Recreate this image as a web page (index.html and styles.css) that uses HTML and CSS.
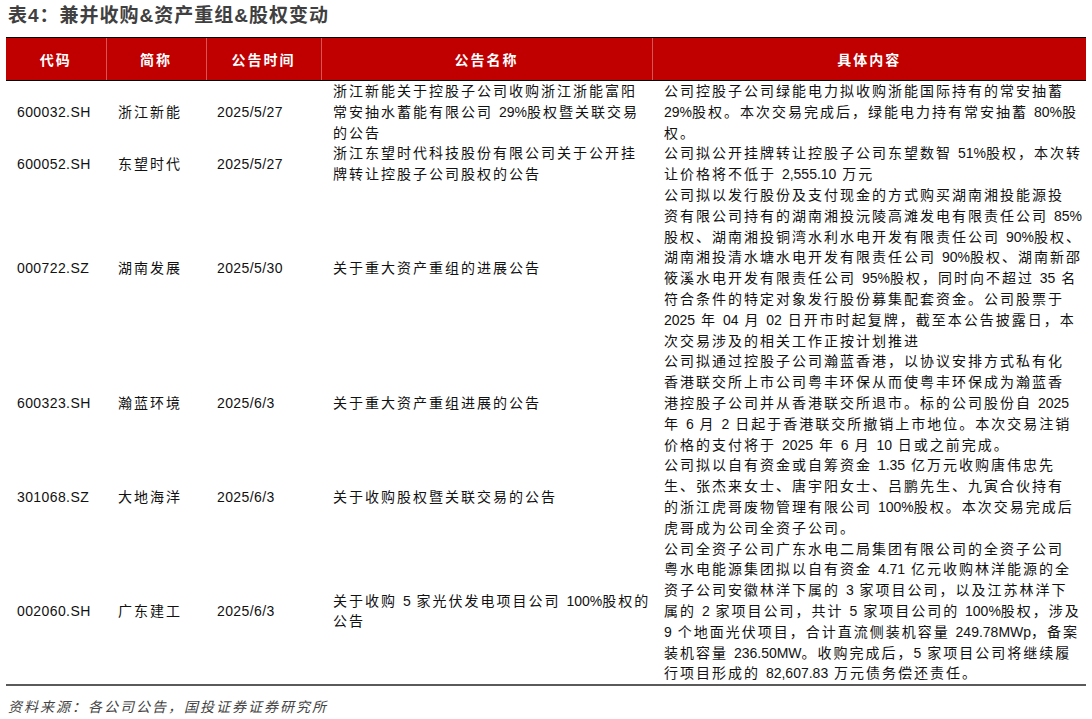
FILE: index.html
```html
<!DOCTYPE html>
<html lang="zh-CN">
<head>
<meta charset="utf-8">
<title>表4：兼并收购&amp;资产重组&amp;股权变动</title>
<link rel="stylesheet" href="styles.css">
</head>
<body>
<div class="page">
  <h1 class="title">表4：兼并收购&amp;资产重组&amp;股权变动</h1>
  <table class="deals">
    <colgroup>
      <col class="c-code"><col class="c-name"><col class="c-date"><col class="c-ann"><col class="c-detail">
    </colgroup>
    <thead>
      <tr><th>代码</th><th>简称</th><th>公告时间</th><th>公告名称</th><th>具体内容</th></tr>
    </thead>
    <tbody>
      <tr>
        <td class="code">600032.SH</td>
        <td>浙江新能</td>
        <td class="code">2025/5/27</td>
        <td>
          <div class="ln">浙江新能关于控股子公司收购浙江浙能富阳</div>
          <div class="ln">常安抽水蓄能有限公司 <span class="n">29%</span>股权暨关联交易</div>
          <div class="ln">的公告</div>
        </td>
        <td>
          <div class="ln">公司控股子公司绿能电力拟收购浙能国际持有的常安抽蓄</div>
          <div class="ln"><span class="n">29%</span>股权。本次交易完成后，绿能电力持有常安抽蓄 <span class="n">80%</span>股</div>
          <div class="ln">权。</div>
        </td>
      </tr>
      <tr>
        <td class="code">600052.SH</td>
        <td>东望时代</td>
        <td class="code">2025/5/27</td>
        <td>
          <div class="ln">浙江东望时代科技股份有限公司关于公开挂</div>
          <div class="ln">牌转让控股子公司股权的公告</div>
        </td>
        <td>
          <div class="ln">公司拟公开挂牌转让控股子公司东望数智 <span class="n">51%</span>股权，本次转</div>
          <div class="ln">让价格将不低于 <span class="n">2,555.10</span> 万元</div>
        </td>
      </tr>
      <tr>
        <td class="code">000722.SZ</td>
        <td>湖南发展</td>
        <td class="code">2025/5/30</td>
        <td><div class="ln">关于重大资产重组的进展公告</div></td>
        <td>
          <div class="ln">公司拟以发行股份及支付现金的方式购买湖南湘投能源投</div>
          <div class="ln">资有限公司持有的湖南湘投沅陵高滩发电有限责任公司 <span class="n">85%</span></div>
          <div class="ln">股权、湖南湘投铜湾水利水电开发有限责任公司 <span class="n">90%</span>股权、</div>
          <div class="ln">湖南湘投清水塘水电开发有限责任公司 <span class="n">90%</span>股权、湖南新邵</div>
          <div class="ln">筱溪水电开发有限责任公司 <span class="n">95%</span>股权，同时向不超过 <span class="n">35</span> 名</div>
          <div class="ln">符合条件的特定对象发行股份募集配套资金。公司股票于</div>
          <div class="ln"><span class="n">2025</span> 年 <span class="n">04</span> 月 <span class="n">02</span> 日开市时起复牌，截至本公告披露日，本</div>
          <div class="ln">次交易涉及的相关工作正按计划推进</div>
        </td>
      </tr>
      <tr>
        <td class="code">600323.SH</td>
        <td>瀚蓝环境</td>
        <td class="code">2025/6/3</td>
        <td><div class="ln">关于重大资产重组进展的公告</div></td>
        <td>
          <div class="ln">公司拟通过控股子公司瀚蓝香港，以协议安排方式私有化</div>
          <div class="ln">香港联交所上市公司粤丰环保从而使粤丰环保成为瀚蓝香</div>
          <div class="ln">港控股子公司并从香港联交所退市。标的公司股份自 <span class="n">2025</span></div>
          <div class="ln">年 <span class="n">6</span> 月 <span class="n">2</span> 日起于香港联交所撤销上市地位。本次交易注销</div>
          <div class="ln">价格的支付将于 <span class="n">2025</span> 年 <span class="n">6</span> 月 <span class="n">10</span> 日或之前完成。</div>
        </td>
      </tr>
      <tr>
        <td class="code">301068.SZ</td>
        <td>大地海洋</td>
        <td class="code">2025/6/3</td>
        <td><div class="ln">关于收购股权暨关联交易的公告</div></td>
        <td>
          <div class="ln">公司拟以自有资金或自筹资金 <span class="n">1.35</span> 亿万元收购唐伟忠先</div>
          <div class="ln">生、张杰来女士、唐宇阳女士、吕鹏先生、九寅合伙持有</div>
          <div class="ln">的浙江虎哥废物管理有限公司 <span class="n">100%</span>股权。本次交易完成后</div>
          <div class="ln">虎哥成为公司全资子公司。</div>
        </td>
      </tr>
      <tr>
        <td class="code">002060.SH</td>
        <td>广东建工</td>
        <td class="code">2025/6/3</td>
        <td>
          <div class="ln">关于收购 <span class="n">5</span> 家光伏发电项目公司 <span class="n">100%</span>股权的</div>
          <div class="ln">公告</div>
        </td>
        <td>
          <div class="ln">公司全资子公司广东水电二局集团有限公司的全资子公司</div>
          <div class="ln">粤水电能源集团拟以自有资金 <span class="n">4.71</span> 亿元收购林洋能源的全</div>
          <div class="ln">资子公司安徽林洋下属的 <span class="n">3</span> 家项目公司，以及江苏林洋下</div>
          <div class="ln">属的 <span class="n">2</span> 家项目公司，共计 <span class="n">5</span> 家项目公司的 <span class="n">100%</span>股权，涉及</div>
          <div class="ln"><span class="n">9</span> 个地面光伏项目，合计直流侧装机容量 <span class="n">249.78MWp</span>，备案</div>
          <div class="ln">装机容量 <span class="n">236.50MW</span>。收购完成后，<span class="n">5</span> 家项目公司将继续履</div>
          <div class="ln">行项目形成的 <span class="n">82,607.83</span> 万元债务偿还责任。</div>
        </td>
      </tr>
    </tbody>
  </table>
  <p class="source">资料来源：各公司公告，国投证券证券研究所</p>
</div>
</body>
</html>
```
FILE: styles.css
```css
html, body {
  margin: 0;
  padding: 0;
  background: #ffffff;
}

body {
  font-family: "Liberation Sans", "Noto Sans CJK SC", sans-serif;
  color: #111111;
}

.page {
  width: 1080px;
  padding: 0 6px;
}

.title {
  margin: 0;
  padding: 4px 0 0 2px;
  height: 33px;
  box-sizing: border-box;
  font-size: 19px;
  line-height: 24px;
  font-weight: bold;
  color: #404040;
  letter-spacing: 1px;
}

.deals {
  width: 1080px;
  margin-top: 4px;
  border-collapse: collapse;
  table-layout: fixed;
}

.c-code { width: 100px; }
.c-name { width: 100px; }
.c-date { width: 115px; }
.c-ann { width: 331px; }
.c-detail { width: 434px; }

.deals th {
  height: 42px;
  padding: 0;
  background: #c00000;
  color: #ffffff;
  font-size: 14px;
  font-weight: bold;
  letter-spacing: 2px;
  text-align: center;
  border-top: 1px solid #000000;
  border-bottom: 1px solid #000000;
}

.deals th + th {
  border-left: 1px solid #d65454;
}

.deals td {
  padding: 0 0 0 12px;
  font-size: 14px;
  line-height: 20.8px;
  letter-spacing: 2px;
  vertical-align: middle;
  white-space: nowrap;
  text-align: left;
}

.deals td.code {
  letter-spacing: 0.4px;
  padding-left: 11px;
}

.deals tbody tr:last-child td {
  border-bottom: 2px solid #5a5a5a;
}

.ln {
  white-space: nowrap;
}

.n {
  letter-spacing: 0;
}

.source {
  margin: 0;
  padding: 11px 0 0 2px;
  font-size: 14px;
  line-height: 20px;
  font-style: italic;
  color: #444444;
  letter-spacing: 2px;
}
```
